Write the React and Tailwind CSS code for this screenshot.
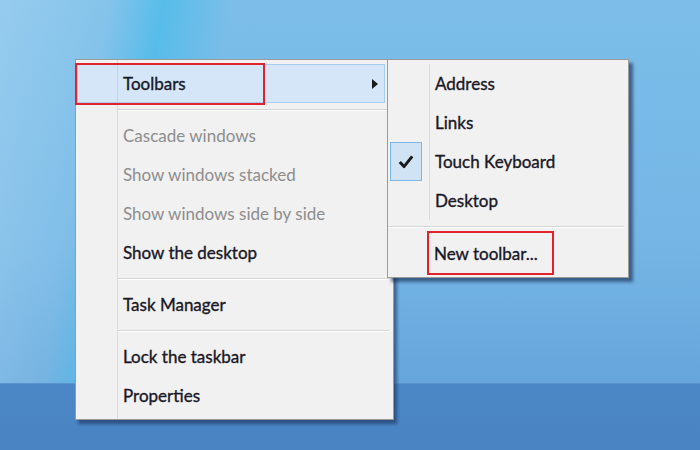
import React from 'react';

const font = { fontFamily: 'Lato, "Open Sans", sans-serif' };

const Separator = ({ inset }) => (
  <div className={`h-[13px] flex items-center ${inset ? 'pl-[42px]' : ''} pr-[4px]`}>
    <div className="w-full h-[2px] border-t border-[#d5d5d5] border-b border-b-white" />
  </div>
);

const Item = ({ label, disabled }) => (
  <div className="h-[39px] flex items-center pl-[47px] pt-[1px]">
    <span className={disabled ? 'text-[#8d8d8d]' : 'text-[#1a1726] [-webkit-text-stroke:0.35px_#1a1726]'}>{label}</span>
  </div>
);

const SubItem = ({ label, checked }) => (
  <div className="h-[39px] flex items-center">
    <div className="w-[41px] h-full flex items-center">
      {checked && (
        <div className="ml-[2px] w-[32px] h-[39px] bg-[#cfe3f5] border border-[#7fb6e8] flex items-center justify-center">
          <svg width="16" height="15" viewBox="0 0 16 15">
            <path d="M1.8 8 L6 12.6 L14.2 2.4" fill="none" stroke="#1a1a1a" strokeWidth="3" strokeLinejoin="round" />
          </svg>
        </div>
      )}
    </div>
    <div className="h-full w-px bg-[#dcdcdc]" />
    <span className="pl-[5px] pt-[1px] text-[#1a1726] [-webkit-text-stroke:0.35px_#1a1726]">{label}</span>
  </div>
);

export default function App() {
  return (
    <div
      className="relative w-[700px] h-[450px] overflow-hidden text-[17px]"
      style={font}
    >
      {/* desktop wallpaper */}
      <div className="absolute inset-0 bg-[linear-gradient(180deg,#7cbee9_0%,#74b5e5_55%,#66a5db_85%)]" />
      <div className="absolute inset-0 bg-[linear-gradient(100deg,rgba(170,215,242,0.55)_0%,rgba(150,205,238,0.35)_14%,rgba(75,188,234,0.75)_21%,rgba(90,185,232,0)_30%)]" />
      {/* taskbar */}
      <div className="absolute left-0 right-0 bottom-0 h-[67px] bg-[linear-gradient(180deg,#4b87c6_0%,#4a84c2_100%)] border-t border-[#5a93cc]" />

      {/* main context menu */}
      <div className="absolute left-[75px] top-[59px] w-[319px] h-[361px] bg-[#f1f1f1] border border-[#9a9a9a] shadow-[3px_4px_3px_rgba(20,40,80,0.55)]">
        <div className="absolute left-[41px] top-0 bottom-0 w-px bg-[#dcdcdc]" />
        <div className="relative pt-[4px] pb-[4px]">
          <div className="relative mx-[1px] h-[39px] flex items-center pt-[1px] bg-[#d4e6f7] border border-[#a9cdf0] mr-[8px]">
            <div className="absolute left-[39px] top-0 bottom-0 w-px bg-[#bcd6ee]" />
            <span className="pl-[45px] text-[#1a1726] [-webkit-text-stroke:0.35px_#1a1726]">Toolbars</span>
            <svg className="absolute right-[6px] top-[14px]" width="6" height="10" viewBox="0 0 6 10">
              <path d="M0 0 L6 5 L0 10 Z" fill="#1a1a1a" />
            </svg>
          </div>
          <Separator inset />
          <Item label="Cascade windows" disabled />
          <Item label="Show windows stacked" disabled />
          <Item label="Show windows side by side" disabled />
          <Item label="Show the desktop" />
          <Separator inset />
          <Item label="Task Manager" />
          <Separator inset />
          <Item label="Lock the taskbar" />
          <Item label="Properties" />
        </div>
        {/* highlight box */}
        <div className="absolute left-[-1px] top-[3px] w-[190px] h-[42px] border-2 border-[#e3232b]" />
      </div>

      {/* toolbars submenu */}
      <div className="absolute left-[387px] top-[59px] w-[242px] h-[219px] bg-[#f1f1f1] border border-[#9a9a9a] shadow-[4px_4px_3px_rgba(20,40,80,0.6)]">
        <div className="relative pt-[4px] pb-[4px]">
          <SubItem label="Address" />
          <SubItem label="Links" />
          <SubItem label="Touch Keyboard" checked />
          <SubItem label="Desktop" />
          <div className="h-[14px] flex items-center pr-[4px]">
            <div className="w-full h-[2px] border-t border-[#d5d5d5] border-b border-b-white" />
          </div>
          <div className="h-[39px] flex items-center pl-[46px] pt-[1px]">
            <span className="text-[#1a1726] [-webkit-text-stroke:0.35px_#1a1726]">New toolbar...</span>
          </div>
        </div>
        <div className="absolute left-[39px] top-[171px] w-[127px] h-[44px] border-2 border-[#e3232b]" />
      </div>
    </div>
  );
}
